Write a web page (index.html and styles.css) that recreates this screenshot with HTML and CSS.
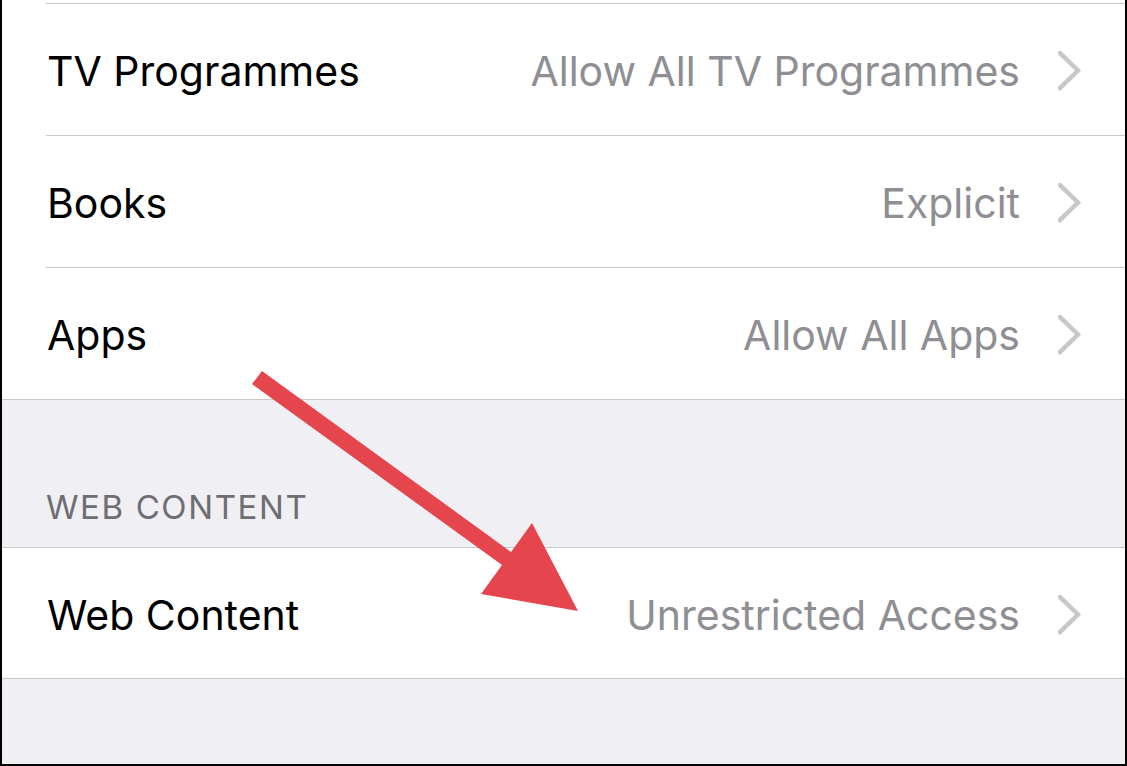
FILE: index.html
```html
<!DOCTYPE html>
<html>
<head>
<meta charset="utf-8">
<link rel="stylesheet" href="styles.css">
</head>
<body>
<div class="screen">
  <div class="top-gap"></div>
  <div class="group group-first">
    <div class="row">
      <span class="label">TV Programmes</span>
      <span class="value">Allow All TV Programmes</span>
      <svg class="chev" viewBox="0 0 24 40"><path d="M2 2 L20 19.5 L2 37" /></svg>
    </div>
    <div class="row">
      <span class="label">Books</span>
      <span class="value">Explicit</span>
      <svg class="chev" viewBox="0 0 24 40"><path d="M2 2 L20 19.5 L2 37" /></svg>
    </div>
    <div class="row row-last">
      <span class="label">Apps</span>
      <span class="value">Allow All Apps</span>
      <svg class="chev" viewBox="0 0 24 40"><path d="M2 2 L20 19.5 L2 37" /></svg>
    </div>
  </div>
  <div class="section-header">WEB CONTENT</div>
  <div class="group">
    <div class="row row-last row-web">
      <span class="label">Web Content</span>
      <span class="value">Unrestricted Access</span>
      <svg class="chev" viewBox="0 0 24 40"><path d="M2 2 L20 19.5 L2 37" /></svg>
    </div>
  </div>
  <div class="footer-gap"></div>
  <svg class="arrow" width="1127" height="766" viewBox="0 0 1127 766">
    <polygon points="262,371 511,552 532,523 578,611 481,594 502,565 252,384" />
  </svg>
</div>
</body>
</html>
```

FILE: styles.css
```css
html, body {
  margin: 0;
  padding: 0;
  background: #ffffff;
}
.screen {
  position: relative;
  width: 1127px;
  height: 766px;
  box-sizing: border-box;
  border-left: 2px solid #000;
  border-right: 2px solid #000;
  border-bottom: 2px solid #000;
  background: #efeff4;
  display: flex;
  flex-direction: column;
  font-family: Inter, "Liberation Sans", sans-serif;
  overflow: hidden;
}
.top-gap {
  height: 3px;
  background: #fff;
}
.group {
  background: #fff;
  border-bottom: 1px solid #c8c7cc;
}
.group-first::before {
  content: "";
  display: block;
  height: 1px;
  margin-left: 44px;
  background: #c8c7cc;
}
.row {
  display: flex;
  align-items: center;
  box-sizing: border-box;
  height: 132px;
  margin-left: 44px;
  padding-right: 43px;
  padding-top: 3px;
  border-bottom: 1px solid #c8c7cc;
}
.row-last {
  border-bottom: none;
  height: 131px;
}
.row-web {
  height: 130px;
}
.label {
  flex: 1;
  font-size: 41px;
  color: #000;
  padding-left: 1px;
}
.value {
  font-size: 41px;
  color: #8e8e93;
  margin-right: 38px;
}
.chev {
  width: 24px;
  height: 40px;
  flex: none;
}
.chev path {
  fill: none;
  stroke: #c7c7cc;
  stroke-width: 4.5;
  stroke-linecap: square;
}
.section-header {
  display: flex;
  align-items: flex-end;
  box-sizing: border-box;
  height: 148px;
  border-bottom: 1px solid #c8c7cc;
  padding-left: 44px;
  padding-bottom: 20px;
  font-size: 33px;
  color: #6d6d72;
  letter-spacing: 1.6px;
}
.footer-gap {
  flex: 1;
}
.arrow {
  position: absolute;
  left: -2px;
  top: 0;
}
.arrow polygon {
  fill: #e5464d;
}
```
